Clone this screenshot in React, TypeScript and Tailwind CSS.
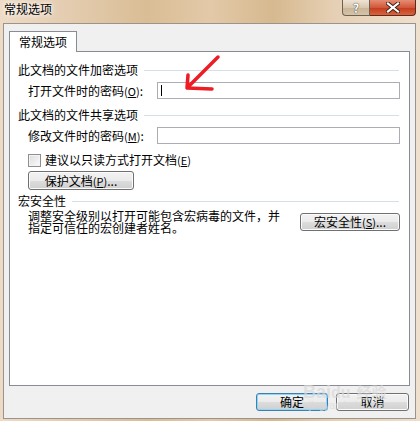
import React from "react";

const font = { fontFamily: '"Noto Sans CJK SC", "Liberation Sans", sans-serif' };

const Heading = ({ text, mt }: { text: string; mt: string }) => (
  <div className={`flex items-center h-[16px] pl-[8px] pr-[10px] ${mt}`}>
    <span className="whitespace-nowrap">{text}</span>
    <div className="flex-1 h-px bg-[#d5dfe5] ml-[6px]" />
  </div>
);

const Key = ({ k }: { k: string }) => (
  <span className="text-[11px]">
    (<span className="underline">{k}</span>)
  </span>
);

const AeroButton = ({
  children,
  className,
  primary,
}: {
  children: React.ReactNode;
  className?: string;
  primary?: boolean;
}) => (
  <div
    className={`flex items-center justify-center rounded-[3px] border ${
      primary ? "border-[#3c7fb1] shadow-[inset_0_0_0_1px_#8fd7f7]" : "border-[#707070] shadow-[inset_0_0_0_1px_#fbfbfb]"
    } bg-[linear-gradient(#f2f2f2_0%,#ebebeb_50%,#dddddd_51%,#cfcfcf_100%)] ${className ?? ""}`}
  >
    {children}
  </div>
);

const PasswordRow = ({ label, k, mt, caret }: { label: string; k: string; mt: string; caret?: boolean }) => (
  <div className={`flex items-center h-[17px] pl-[18px] ${mt}`}>
    <span className="w-[129px] whitespace-nowrap">
      {label}
      <Key k={k} />:
    </span>
    <div className="w-[243px] h-[17px] border border-[#abadb3] bg-white flex items-center pl-[3px]">
      {caret ? <div className="w-px h-[11px] bg-black" /> : null}
    </div>
  </div>
);

export default function App() {
  return (
    <div
      className="w-[420px] h-[421px] flex flex-col text-[12px] leading-[12px] text-black bg-[linear-gradient(90deg,#eedbc6_0%,#e4cdb1_15%,#d9bd95_35%,#e3c9a8_50%,#d6b98f_65%,#e6d0b5_80%,#efdfcd_100%)]"
      style={font}
    >
      {/* title bar */}
      <div className="h-[23px] flex justify-between pl-[4px] pr-[4px]">
        <div className="pt-[3px] text-[12px] leading-[12px] [text-shadow:0_0_4px_#fff,0_0_6px_#fff]">常规选项</div>
        <div className="flex h-[16px]">
          <div className="w-[28px] h-[16px] rounded-bl-[4px] border border-t-0 border-[#6f6152] bg-[linear-gradient(#efe3d3,#d9c8b0_50%,#c8b497_51%,#d6c4a8)] flex items-center justify-center text-white font-bold text-[12px] leading-[14px] [text-shadow:0_0_1px_#444,0_0_1px_#444]">
            ?
          </div>
          <div className="w-[46px] h-[16px] rounded-br-[4px] border border-t-0 border-l-0 border-[#5e2a1c] bg-[linear-gradient(#e48d73,#d2583a_50%,#c23b1c_51%,#d8643e)] flex items-center justify-center">
            <svg width="14" height="11" viewBox="0 0 14 11">
              <path d="M2 1.5 L12 9.5 M12 1.5 L2 9.5" stroke="#3a1d14" strokeWidth="4" strokeLinecap="square" />
              <path d="M2 1.5 L12 9.5 M12 1.5 L2 9.5" stroke="#ffffff" strokeWidth="2.2" strokeLinecap="square" />
            </svg>
          </div>
        </div>
      </div>

      {/* client area */}
      <div className="flex-1 ml-[3px] mr-[4px] mb-[2px] border border-[#9a948c] bg-[#f0f0f0] px-[5px] flex flex-col">
        <div className="pt-[7px] flex">
          <div className="relative z-10 w-[68px] h-[21px] bg-white border border-b-0 border-[#898c95] flex items-center justify-center">
            常规选项
          </div>
        </div>
        <div className="relative -mt-px h-[335px] bg-white border border-[#898c95] flex flex-col">
          <Heading text="此文档的文件加密选项" mt="mt-[10px]" />
          <PasswordRow label="打开文件时的密码" k="O" mt="mt-[4px]" caret />
          <Heading text="此文档的文件共享选项" mt="mt-[8px]" />
          <PasswordRow label="修改文件时的密码" k="M" mt="mt-[4px]" />

          <div className="flex items-center h-[14px] pl-[18px] mt-[9px]">
            <div className="w-[13px] h-[13px] border border-[#8f8f8f] bg-[linear-gradient(135deg,#dcdcdc,#fbfbfb)] shadow-[inset_0_0_0_1px_#f4f4f4]" />
            <span className="ml-[4px] whitespace-nowrap">
              建议以只读方式打开文档
              <Key k="E" />
            </span>
          </div>

          <div className="pl-[18px] mt-[4px]">
            <AeroButton className="w-[106px] h-[19px]">
              <span className="whitespace-nowrap">
                保护文档
                <Key k="P" />
                ...
              </span>
            </AeroButton>
          </div>

          <Heading text="宏安全性" mt="mt-[3px]" />

          <div className="flex pl-[18px] mt-[1px]">
            <p className="w-[258px] leading-[12px]">调整安全级别以打开可能包含宏病毒的文件，并指定可信任的宏创建者姓名。</p>
            <AeroButton className="ml-[14px] mt-[3px] w-[100px] h-[18px]">
              <span className="whitespace-nowrap">
                宏安全性
                <Key k="S" />
                ...
              </span>
            </AeroButton>
          </div>

          {/* annotation arrow */}
          <svg className="absolute left-[165px] top-[2px]" width="50" height="42" viewBox="0 0 50 42">
            <path
              d="M43 3 L12 34 M13 21 L12 34 L37 35"
              stroke="#ee1c24"
              strokeWidth="3.5"
              fill="none"
              strokeLinecap="round"
              strokeLinejoin="round"
            />
          </svg>
        </div>

        <div className="relative flex justify-end gap-[8px] mt-[7px] pr-[1px]">
          <AeroButton primary className="w-[72px] h-[18px]">
            确定
          </AeroButton>
          <AeroButton className="w-[73px] h-[18px]">取消</AeroButton>
          <div className="absolute left-[294px] -top-[9px] flex flex-col items-start text-[#d9d9d9] opacity-70 pointer-events-none">
            <span className="text-[18px] leading-[16px] font-bold" style={{ fontFamily: '"Liberation Sans", sans-serif' }}>
              Bai<span className="text-[16px]">du</span>
              <span className="text-[15px] ml-[6px]" style={font}>
                经验
              </span>
            </span>
            <span className="text-[10px] leading-[10px] ml-[6px]" style={{ fontFamily: '"Liberation Sans", sans-serif' }}>
              jingyan.baidu.com
            </span>
          </div>
        </div>
      </div>
    </div>
  );
}
